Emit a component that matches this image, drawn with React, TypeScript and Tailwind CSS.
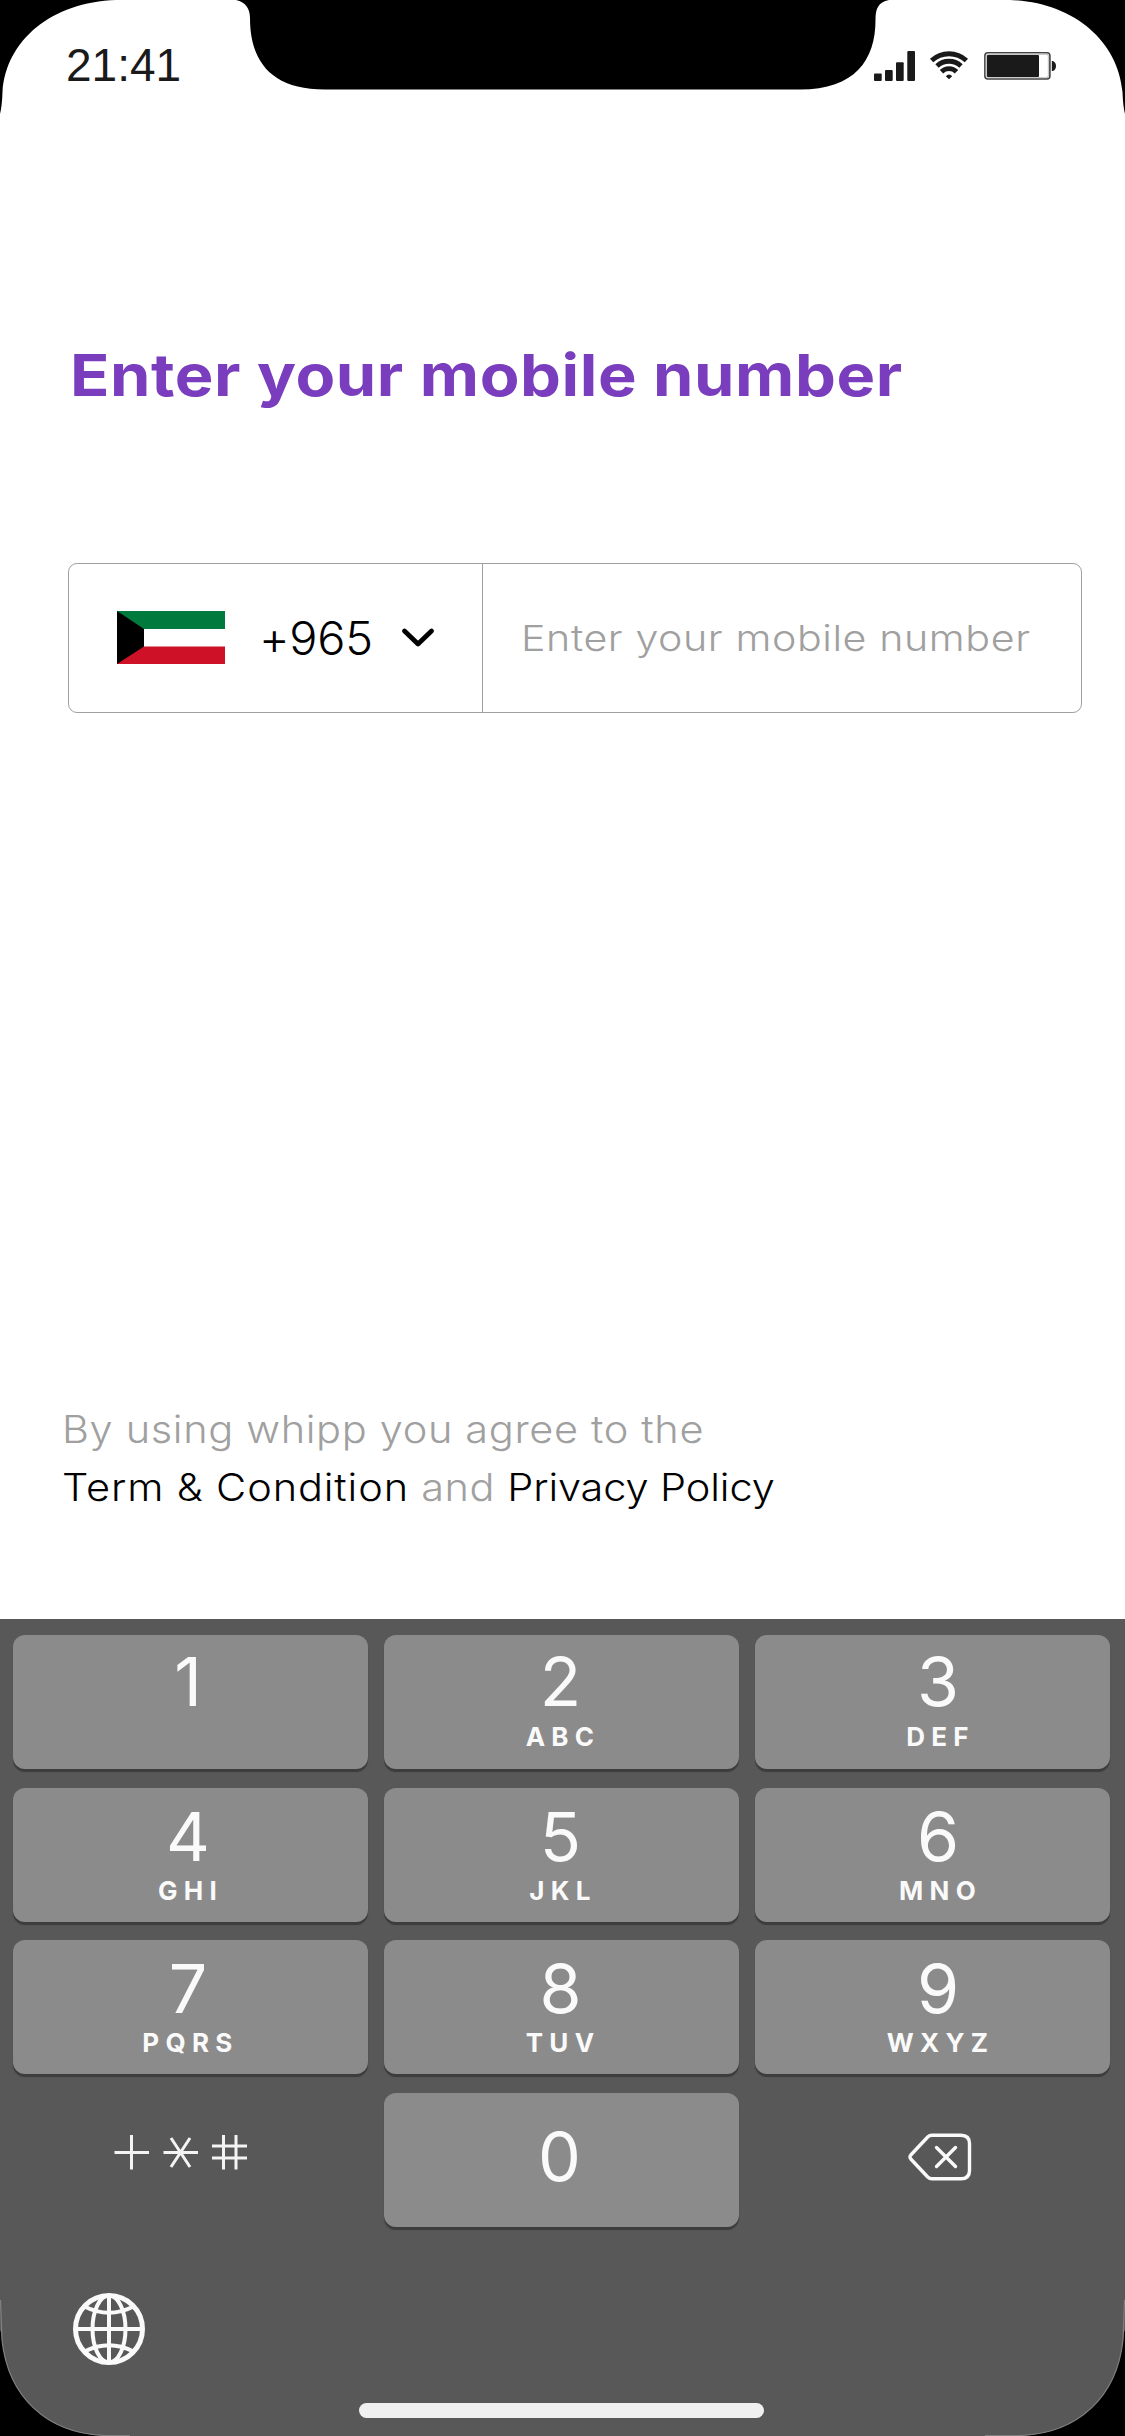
type KeyDef = { digit: string; letters?: string };

const keyRows: KeyDef[][] = [
  [{ digit: '1' }, { digit: '2', letters: 'ABC' }, { digit: '3', letters: 'DEF' }],
  [{ digit: '4', letters: 'GHI' }, { digit: '5', letters: 'JKL' }, { digit: '6', letters: 'MNO' }],
  [{ digit: '7', letters: 'PQRS' }, { digit: '8', letters: 'TUV' }, { digit: '9', letters: 'WXYZ' }],
];

const digitRowPadding = ['pt-[11px]', 'pt-[13px]', 'pt-[13px]'];
const lettersRowMargin = ['mt-[6px]', 'mt-[5px]', 'mt-[5px]'];
const columnShift = ['pr-[4px]', 'pr-[1px]', 'pl-[12px]'];

function StatusBar() {
  return (
    <header className="flex h-[120px] shrink-0 items-start justify-between pl-[66px] pr-[68px]">
      <span className="mt-[39px] font-['Liberation_Sans',sans-serif] text-[46px] leading-[52px] text-[#1a1a1a]">21:41</span>
      <div className="mt-[50px] flex h-8 items-start text-[#1a1a1a]">
        <svg width="42" height="32" viewBox="0 0 42 32" fill="currentColor">
          <rect x="0" y="23.5" width="7.7" height="7.5" rx="1" />
          <rect x="11" y="20" width="7.7" height="11" rx="1" />
          <rect x="22" y="12.3" width="7.7" height="18.7" rx="1" />
          <rect x="33.3" y="1" width="7.7" height="30" rx="1" />
        </svg>
        <svg className="ml-[13px]" width="40" height="32" viewBox="0 0 40 32" fill="none" stroke="currentColor" strokeWidth="4.8">
          <path d="M2.6 10.6A25.5 25.5 0 0 1 37.4 10.6" />
          <path d="M8 16A17.5 17.5 0 0 1 32 16" />
          <path d="M12.5 21.8A10.500 10.500 0 0 1 27.5 21.8" />
          <path d="M16.800 26.200Q20 22.800 23.200 26.200L20 29.2Z" fill="currentColor" stroke="none" />
        </svg>
        <svg className="ml-[15px]" width="73" height="32" viewBox="0 0 73 32">
          <rect x="0.9" y="2.8" width="65" height="26.2" rx="3" fill="#fff" stroke="#444" strokeWidth="1.6" />
          <rect x="2.4" y="4.3" width="62" height="23.2" rx="2" fill="none" stroke="#c9c9c9" strokeWidth="1.2" />
          <rect x="3" y="5" width="52" height="22" rx="1" fill="#1a1a1a" />
          <path d="M67.8 11h1.2q3 1.500 3 5t-3 5h-1.200z" fill="#1a1a1a" />
        </svg>
      </div>
    </header>
  );
}

function KuwaitFlag() {
  return (
    <svg width="108" height="53" viewBox="0 0 108 53" className="-mt-[2px]">
      <rect width="108" height="53" fill="#fff" />
      <rect width="108" height="18" fill="#007a3d" />
      <rect y="35.500" width="108" height="17.500" fill="#ce1126" />
      <path d="M0 0L27 18V35.500L0 53Z" fill="#000" />
    </svg>
  );
}

function PhoneField() {
  return (
    <div className="ml-[68px] mt-[136px] flex h-[150px] w-[1014px] shrink-0 rounded-[9px] border border-[#a0a0a0]">
      <button className="flex w-[414px] items-center border-r border-[#a0a0a0] pl-[48px]">
        <KuwaitFlag />
        <span className="ml-[34px] w-[112px] origin-left scale-x-[1.02] whitespace-nowrap text-left text-[46px] font-light leading-none tracking-[-0.3px] text-black">+965</span>
        <svg className="ml-[30px]" width="34" height="22" viewBox="0 0 34 22" fill="none" stroke="#000" strokeWidth="4.800" strokeLinecap="round" strokeLinejoin="round">
          <path d="M3.500 4L17 17L30.500 4" />
        </svg>
      </button>
      <div className="flex flex-1 items-center pl-[38px]">
        <span className="origin-left scale-x-[1.144] whitespace-nowrap text-[36px] font-light leading-none tracking-[0.5px] text-[#a0a0a0]">Enter your mobile number</span>
      </div>
    </div>
  );
}

function Key({ k, row, col }: { k: KeyDef; row: number; col: number }) {
  return (
    <button
      className={`flex h-[134px] flex-col items-center rounded-[12px] bg-[#8b8b8b] text-[#fafafa] shadow-[0_3px_1px_#3c3c3c] ${digitRowPadding[row]} ${columnShift[col]}`}
    >
      <span className="text-[68px] font-normal leading-[70px]">{k.digit}</span>
      {k.letters && (
        <span className={`-mr-[5px] text-[26px] font-bold leading-[30px] tracking-[6.3px] ${lettersRowMargin[row]}`}>{k.letters}</span>
      )}
    </button>
  );
}

function SymbolsIcon() {
  return (
    <svg width="136" height="38" viewBox="0 0 136 38" fill="none" stroke="#f4f4f4" strokeWidth="3">
      <path d="M1.500 19.500H36M18.500 2V36.500" />
      <path d="M50.500 19.500H85M58 5L77 34M77 5L58 34" />
      <path d="M99 13H134M99 25H134M110.500 2V36.500M123 2V36.500" />
    </svg>
  );
}

function DeleteIcon() {
  return (
    <svg width="64" height="48" viewBox="0 0 64 48" fill="none" stroke="#fafafa" strokeWidth="3.400" strokeLinejoin="round" strokeLinecap="round">
      <path d="M24 2.200H53Q61.500 2.200 61.500 10.500V37.500Q61.500 45.800 53 45.800H24Q21.500 45.800 19.700 44L2.800 26Q1.200 24 2.800 22L19.700 4Q21.500 2.200 24 2.200Z" />
      <path d="M28.500 14.500L47.500 33.500M47.500 14.500L28.500 33.500" strokeWidth="3.400" />
    </svg>
  );
}

function GlobeIcon() {
  return (
    <svg width="74" height="74" viewBox="0 0 74 74" fill="none" stroke="#fafafa" strokeWidth="4">
      <circle cx="37" cy="37" r="33.500" strokeWidth="5" />
      <ellipse cx="37" cy="37" rx="16.500" ry="33.500" />
      <path d="M37 3V71M3 37H71" />
      <path d="M12.500 14.500Q37 27 61.500 14.500M12.500 59.500Q37 47 61.500 59.500" />
    </svg>
  );
}

function Keyboard() {
  return (
    <section className="h-[817px] shrink-0 bg-[#585858] pl-[12.5px] pr-[15px] pt-[16px]">
      <div className="grid grid-cols-[355px_355px_355px] gap-x-[16px] gap-y-[18.700px]">
        {keyRows.map((row, r) => row.map((k, c) => <Key key={k.digit} k={k} row={r} col={c} />))}
        <div className="pl-[100px] pt-[40px]">
          <SymbolsIcon />
        </div>
        <button className="flex h-[134px] justify-center rounded-[12px] bg-[#8b8b8b] pr-[3px] pt-[28px] text-[#fafafa] shadow-[0_3px_1px_#3c3c3c]">
          <span className="text-[68px] leading-[70px]">0</span>
        </button>
        <div className="pl-[153px] pt-[40px]">
          <DeleteIcon />
        </div>
      </div>
      <div className="ml-[59px] mt-[65px]">
        <GlobeIcon />
      </div>
      <div className="ml-[346px] mt-[37px] h-[15px] w-[405px] rounded-full bg-[#f0f0f0]" />
    </section>
  );
}

function DeviceFrame() {
  return (
    <svg className="pointer-events-none absolute inset-0" width="1125" height="2436" viewBox="0 0 1125 2436">
      <path d="M0 0H116C52 2 6 40 2.500 92Q2 106 0 114Z" />
      <path d="M1125 0H1010C1072 2 1118 40 1122.500 92Q1123 106 1125 114Z" />
      <path d="M236 0C246 2 250 9 250 18C250 60 270 89.500 325 89.500H800C855 89.500 875.500 60 875.500 20C875.500 9 878 2 889 0Z" />
      <path d="M0 2330Q1.500 2333 2 2340C8 2396 46 2434 106 2436H0Z" />
      <path d="M1125 2330Q1123.500 2333 1123 2340C1117 2396 1079 2434 1019 2436H1125Z" />
      <path
        d="M0.500 2300Q1.500 2325 2 2340C8 2396 46 2434 106 2435.500H130M1124.500 2300Q1123.500 2325 1123 2340C1117 2396 1079 2434 1019 2435.500H985"
        fill="none"
        stroke="#808080"
        strokeWidth="1.200"
      />
    </svg>
  );
}

export default function App() {
  return (
    <main className="relative flex h-[2436px] w-[1125px] flex-col overflow-hidden bg-white font-[Inter,sans-serif]">
      <StatusBar />
      <h1 className="ml-[70px] mt-[220px] h-[87px] w-[760px] shrink-0 origin-left scale-x-[1.12] whitespace-nowrap text-[58px] font-bold leading-[70px] tracking-[0.5px] text-[#793dbd]">
        Enter your mobile number
      </h1>
      <PhoneField />
      <p className="ml-[62px] mt-[687px] h-[219px] w-[700px] shrink-0 origin-left scale-x-[1.092] whitespace-nowrap text-[38px] font-light leading-[58px] tracking-[0.5px] text-[#a0a0a0]">
        <span className="tracking-[0.6px]">By using whipp you agree to the</span>
        <br />
        <a className="tracking-[0.8px] text-black">Term &amp; Condition</a> and <a className="tracking-[-0.1px] text-black">Privacy Policy</a>
      </p>
      <Keyboard />
      <DeviceFrame />
    </main>
  );
}
